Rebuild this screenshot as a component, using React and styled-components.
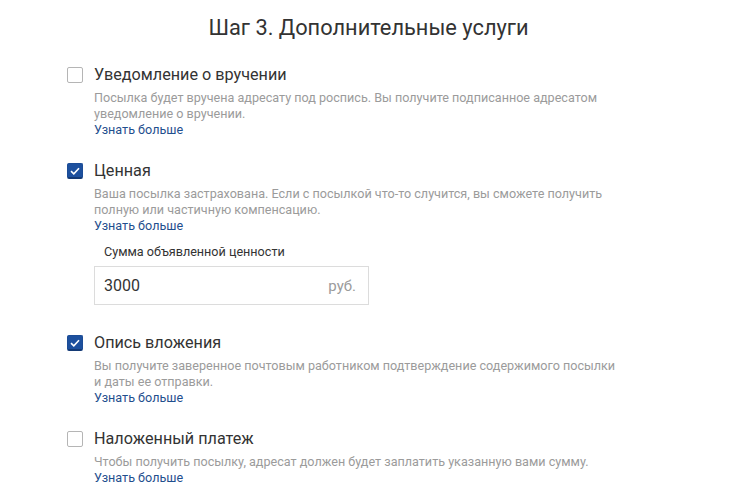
import React, { useState } from 'react';
import styled, { createGlobalStyle } from 'styled-components';

const GlobalStyle = createGlobalStyle`
  body {
    margin: 0;
    background: #ffffff;
    font-family: Roboto, "Liberation Sans", Arial, sans-serif;
    color: #333333;
  }
`;

const Page = styled.div`
  padding: 14px 0 0 67px;
`;

const StepTitle = styled.h2`
  margin: 0 0 23px -67px;
  font-size: 21.8px;
  font-weight: 400;
  line-height: 28px;
  text-align: center;
  color: #333333;
`;

const Option = styled.div`
  padding-bottom: 23px;

  &:last-child {
    padding-bottom: 0;
  }
`;

const Header = styled.label`
  display: flex;
  align-items: center;
  gap: 11px;
  height: 20px;
  cursor: pointer;
`;

const Box = styled.span`
  box-sizing: border-box;
  width: 16px;
  height: 16px;
  border-radius: 2px;
  display: flex;
  align-items: center;
  justify-content: center;
  flex-shrink: 0;
  border: 1px solid ${p => (p.checked ? '#1c4c96' : '#b5b5b5')};
  border-bottom: ${p => (p.checked ? '2px solid #143a75' : '1px solid #b5b5b5')};
  background: ${p => (p.checked ? '#1d509e' : '#ffffff')};
`;

const OptionName = styled.span`
  font-size: 16.2px;
  line-height: 20px;
  color: #333333;
`;

const Body = styled.div`
  margin: 5px 0 0 27px;
  max-width: 525px;
`;

const Description = styled.p`
  margin: 0;
  font-size: 12.6px;
  line-height: 16px;
  color: #9b9b9b;
`;

const MoreLink = styled.a`
  display: block;
  font-size: 12.6px;
  line-height: 16px;
  color: #1f4f8e;
  text-decoration: none;
`;

const Field = styled.div`
  padding: 10px 0 5px;
`;

const FieldLabel = styled.div`
  padding-left: 10px;
  font-size: 12.6px;
  line-height: 16px;
  color: #333333;
`;

const InputWrap = styled.div`
  box-sizing: border-box;
  margin-top: 6px;
  width: 275px;
  height: 39px;
  border: 1px solid #dcdcdc;
  display: flex;
  align-items: center;
  padding: 0 12px 0 9px;
`;

const Input = styled.input`
  flex: 1;
  min-width: 0;
  border: none;
  outline: none;
  font-family: inherit;
  font-size: 16px;
  color: #333333;
  background: transparent;
  padding: 0;
`;

const Unit = styled.span`
  font-size: 15px;
  color: #9b9b9b;
`;

const Check = () => (
  <svg width="10" height="8" viewBox="0 0 10 8">
    <path d="M1 4.2 L3.8 6.8 L9 1.2" fill="none" stroke="#ffffff" strokeWidth="1.6" />
  </svg>
);

const options = [
  {
    name: 'Уведомление о вручении',
    text: 'Посылка будет вручена адресату под роспись. Вы получите подписанное адресатом уведомление о вручении.',
    checked: false,
  },
  {
    name: 'Ценная',
    text: 'Ваша посылка застрахована. Если с посылкой что-то случится, вы сможете получить полную или частичную компенсацию.',
    checked: true,
    value: true,
  },
  {
    name: 'Опись вложения',
    text: 'Вы получите заверенное почтовым работником подтверждение содержимого посылки и даты ее отправки.',
    checked: true,
  },
  {
    name: 'Наложенный платеж',
    text: 'Чтобы получить посылку, адресат должен будет заплатить указанную вами сумму.',
    checked: false,
  },
];

export default function App() {
  const [state, setState] = useState(options.map(o => o.checked));
  const [amount, setAmount] = useState('3000');

  const toggle = i => setState(s => s.map((v, j) => (j === i ? !v : v)));

  return (
    <Page>
      <GlobalStyle />
      <StepTitle>Шаг 3. Дополнительные услуги</StepTitle>
      {options.map((o, i) => (
        <Option key={o.name}>
          <Header onClick={() => toggle(i)}>
            <Box checked={state[i]}>{state[i] && <Check />}</Box>
            <OptionName>{o.name}</OptionName>
          </Header>
          <Body>
            <Description>{o.text}</Description>
            <MoreLink href="#">Узнать больше</MoreLink>
            {o.value && state[i] && (
              <Field>
                <FieldLabel>Сумма объявленной ценности</FieldLabel>
                <InputWrap>
                  <Input value={amount} onChange={e => setAmount(e.target.value)} />
                  <Unit>руб.</Unit>
                </InputWrap>
              </Field>
            )}
          </Body>
        </Option>
      ))}
    </Page>
  );
}
